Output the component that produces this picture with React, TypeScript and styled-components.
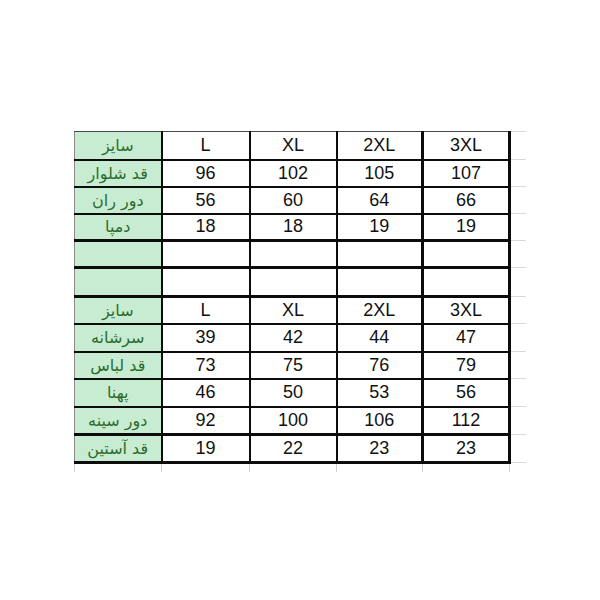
import styled, { createGlobalStyle } from "styled-components";

const GlobalStyle = createGlobalStyle`
  html, body {
    margin: 0;
    background: #ffffff;
  }
`;

type SizeRow = {
  label: string;
  values: string[];
  height: number;
  bottom: "thin" | "thick";
};

const header = ["L", "XL", "2XL", "3XL"];

const rows: SizeRow[] = [
  { label: "سایز", values: header, height: 28, bottom: "thin" },
  { label: "قد شلوار", values: ["96", "102", "105", "107"], height: 27, bottom: "thin" },
  { label: "دور ران", values: ["56", "60", "64", "66"], height: 27, bottom: "thin" },
  { label: "دمپا", values: ["18", "18", "19", "19"], height: 27, bottom: "thick" },
  { label: "", values: ["", "", "", ""], height: 27, bottom: "thick" },
  { label: "", values: ["", "", "", ""], height: 29, bottom: "thick" },
  { label: "سایز", values: header, height: 27, bottom: "thin" },
  { label: "سرشانه", values: ["39", "42", "44", "47"], height: 28, bottom: "thin" },
  { label: "قد لباس", values: ["73", "75", "76", "79"], height: 27, bottom: "thin" },
  { label: "پهنا", values: ["46", "50", "53", "56"], height: 28, bottom: "thin" },
  { label: "دور سینه", values: ["92", "100", "106", "112"], height: 28, bottom: "thick" },
  { label: "قد آستین", values: ["19", "22", "23", "23"], height: 28, bottom: "thick" },
];

const columnWidths = [87, 88, 87, 86, 87];
const columnRight = [2, 2, 2, 3, 3];

const App = () => {
  return (
    <>
      <GlobalStyle />
      <Page>
        <Sheet>
          <colgroup>
            {columnWidths.map((w, i) => (
              <col key={i} style={{ width: w }} />
            ))}
            <col style={{ width: 16 }} />
          </colgroup>
          <tbody>
            {rows.map((row, r) => (
              <tr key={r} style={{ height: row.height }}>
                <Label $first={r === 0} $bottom={row.bottom}>
                  {row.label}
                </Label>
                {row.values.map((v, c) => (
                  <Value
                    key={c}
                    $first={r === 0}
                    $bottom={row.bottom}
                    $right={columnRight[c + 1]}
                  >
                    {v}
                  </Value>
                ))}
                <Margin $first={r === 0} />
              </tr>
            ))}
            <TickRow>
              {columnWidths.map((_, i) => (
                <Tick key={i} />
              ))}
              <Tick />
            </TickRow>
          </tbody>
        </Sheet>
      </Page>
    </>
  );
};

export default App;

const Page = styled.div`
  width: 600px;
  height: 600px;
  padding: 131px 0 0 74px;
  box-sizing: border-box;
  background: #ffffff;
`;

const Sheet = styled.table`
  border-collapse: collapse;
  table-layout: fixed;
  width: 451px;
`;

const Cell = styled.td<{ $first: boolean; $bottom: "thin" | "thick" }>`
  padding: 0;
  text-align: center;
  vertical-align: middle;
  border-top: ${(p) => (p.$first ? "1px solid #4a4a4a" : "none")};
  border-bottom: ${(p) => (p.$bottom === "thick" ? "3px" : "2px")} solid #0c0c0c;
  white-space: nowrap;
  overflow: hidden;
`;

const Label = styled(Cell)`
  background: #c8ecd1;
  color: #2c6b2e;
  font-family: "DejaVu Sans", sans-serif;
  font-size: 16px;
  border-left: 1px solid #8a8a8a;
  border-right: 2px solid #0c0c0c;
`;

const Value = styled(Cell)<{ $right: number }>`
  color: #111111;
  font-family: "Liberation Sans", Arial, sans-serif;
  font-size: 18px;
  border-right: ${(p) => p.$right}px solid #0c0c0c;
`;

const Margin = styled.td<{ $first: boolean }>`
  padding: 0;
  border-top: ${(p) => (p.$first ? "1px solid #d8d8d8" : "none")};
  border-bottom: 1px solid #d8d8d8;
`;

const TickRow = styled.tr`
  height: 9px;
`;

const Tick = styled.td`
  padding: 0;
  border-left: 1px solid #cfcfcf;
`;
